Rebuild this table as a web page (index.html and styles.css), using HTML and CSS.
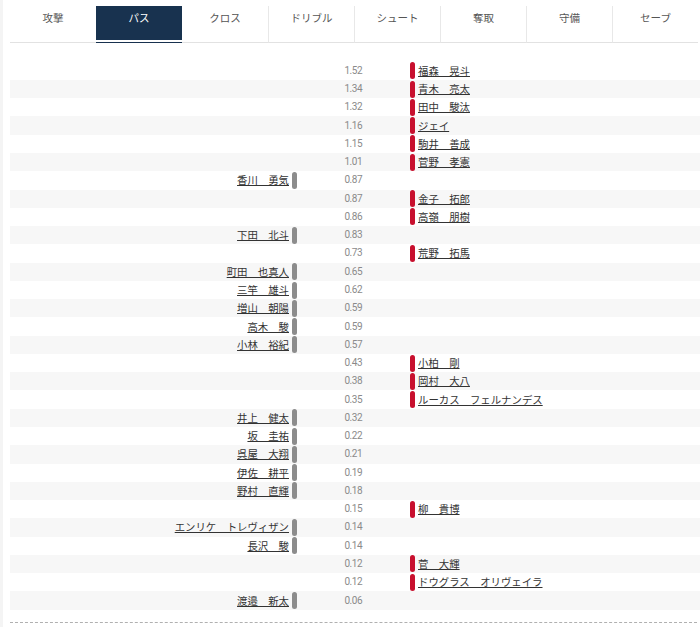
FILE: index.html
```html
<!DOCTYPE html>
<html lang="ja">
<head>
<meta charset="utf-8">
<link rel="stylesheet" href="styles.css">
</head>
<body>
<div class="page">
  <ul class="tabs">
    <li class="tab"><span class="tab-link">攻撃</span></li>
    <li class="tab active"><span class="tab-link">パス</span></li>
    <li class="tab"><span class="tab-link">クロス</span></li>
    <li class="tab sep"><span class="tab-link">ドリブル</span></li>
    <li class="tab sep"><span class="tab-link">シュート</span></li>
    <li class="tab sep"><span class="tab-link">奪取</span></li>
    <li class="tab sep"><span class="tab-link">守備</span></li>
    <li class="tab sep"><span class="tab-link">セーブ</span></li>
  </ul>

  <div class="table">
    <div class="row"><div class="left"></div><div class="val">1.52</div><div class="right"><span class="bar red"></span><a class="name">福森　晃斗</a></div></div>
    <div class="row"><div class="left"></div><div class="val">1.34</div><div class="right"><span class="bar red"></span><a class="name">青木　亮太</a></div></div>
    <div class="row"><div class="left"></div><div class="val">1.32</div><div class="right"><span class="bar red"></span><a class="name">田中　駿汰</a></div></div>
    <div class="row"><div class="left"></div><div class="val">1.16</div><div class="right"><span class="bar red"></span><a class="name">ジェイ</a></div></div>
    <div class="row"><div class="left"></div><div class="val">1.15</div><div class="right"><span class="bar red"></span><a class="name">駒井　善成</a></div></div>
    <div class="row"><div class="left"></div><div class="val">1.01</div><div class="right"><span class="bar red"></span><a class="name">菅野　孝憲</a></div></div>
    <div class="row"><div class="left"><a class="name">香川　勇気</a><span class="bar gray"></span></div><div class="val">0.87</div><div class="right"></div></div>
    <div class="row"><div class="left"></div><div class="val">0.87</div><div class="right"><span class="bar red"></span><a class="name">金子　拓郎</a></div></div>
    <div class="row"><div class="left"></div><div class="val">0.86</div><div class="right"><span class="bar red"></span><a class="name">高嶺　朋樹</a></div></div>
    <div class="row"><div class="left"><a class="name">下田　北斗</a><span class="bar gray"></span></div><div class="val">0.83</div><div class="right"></div></div>
    <div class="row"><div class="left"></div><div class="val">0.73</div><div class="right"><span class="bar red"></span><a class="name">荒野　拓馬</a></div></div>
    <div class="row"><div class="left"><a class="name">町田　也真人</a><span class="bar gray"></span></div><div class="val">0.65</div><div class="right"></div></div>
    <div class="row"><div class="left"><a class="name">三竿　雄斗</a><span class="bar gray"></span></div><div class="val">0.62</div><div class="right"></div></div>
    <div class="row"><div class="left"><a class="name">増山　朝陽</a><span class="bar gray"></span></div><div class="val">0.59</div><div class="right"></div></div>
    <div class="row"><div class="left"><a class="name">高木　駿</a><span class="bar gray"></span></div><div class="val">0.59</div><div class="right"></div></div>
    <div class="row"><div class="left"><a class="name">小林　裕紀</a><span class="bar gray"></span></div><div class="val">0.57</div><div class="right"></div></div>
    <div class="row"><div class="left"></div><div class="val">0.43</div><div class="right"><span class="bar red"></span><a class="name">小柏　剛</a></div></div>
    <div class="row"><div class="left"></div><div class="val">0.38</div><div class="right"><span class="bar red"></span><a class="name">岡村　大八</a></div></div>
    <div class="row"><div class="left"></div><div class="val">0.35</div><div class="right"><span class="bar red"></span><a class="name">ルーカス　フェルナンデス</a></div></div>
    <div class="row"><div class="left"><a class="name">井上　健太</a><span class="bar gray"></span></div><div class="val">0.32</div><div class="right"></div></div>
    <div class="row"><div class="left"><a class="name">坂　圭祐</a><span class="bar gray"></span></div><div class="val">0.22</div><div class="right"></div></div>
    <div class="row"><div class="left"><a class="name">呉屋　大翔</a><span class="bar gray"></span></div><div class="val">0.21</div><div class="right"></div></div>
    <div class="row"><div class="left"><a class="name">伊佐　耕平</a><span class="bar gray"></span></div><div class="val">0.19</div><div class="right"></div></div>
    <div class="row"><div class="left"><a class="name">野村　直輝</a><span class="bar gray"></span></div><div class="val">0.18</div><div class="right"></div></div>
    <div class="row"><div class="left"></div><div class="val">0.15</div><div class="right"><span class="bar red"></span><a class="name">柳　貴博</a></div></div>
    <div class="row"><div class="left"><a class="name">エンリケ　トレヴィザン</a><span class="bar gray"></span></div><div class="val">0.14</div><div class="right"></div></div>
    <div class="row"><div class="left"><a class="name">長沢　駿</a><span class="bar gray"></span></div><div class="val">0.14</div><div class="right"></div></div>
    <div class="row"><div class="left"></div><div class="val">0.12</div><div class="right"><span class="bar red"></span><a class="name">菅　大輝</a></div></div>
    <div class="row"><div class="left"></div><div class="val">0.12</div><div class="right"><span class="bar red"></span><a class="name">ドウグラス　オリヴェイラ</a></div></div>
    <div class="row"><div class="left"><a class="name">渡邉　新太</a><span class="bar gray"></span></div><div class="val">0.06</div><div class="right"></div></div>
  </div>
  <div class="dash"></div>
</div>
</body>
</html>
```

FILE: styles.css
```css
html, body {
  margin: 0;
  padding: 0;
  background: #ffffff;
}

body {
  font-family: "Noto Sans CJK JP", "Noto Sans", sans-serif;
  color: #333333;
}

.page {
  border-left: 3px solid #f4f4f4;
  padding-left: 7px;
  min-height: 627px;
  box-sizing: border-box;
}

.tabs {
  list-style: none;
  margin: 0;
  padding: 6px 2px 0 0;
  display: grid;
  grid-template-columns: repeat(8, 1fr);
}

.tab {
  padding-bottom: 2px;
  border-bottom: 1px solid #e2e2e2;
}

.tab.sep {
  border-left: 1px solid #e8e8e8;
}

.tab-link {
  display: block;
  height: 34px;
  box-sizing: border-box;
  padding-top: 5px;
  line-height: 14px;
  font-size: 10.5px;
  text-align: center;
  color: #555555;
}

.tab.active {
  border-bottom-color: #18324f;
}

.tab.active .tab-link {
  background: #18324f;
  color: #ffffff;
}

.table {
  margin-top: 18.7px;
}

.row {
  display: grid;
  grid-template-columns: 290px 62px 1fr;
  height: 18.28px;
  align-items: center;
}

.row:nth-child(even) {
  background: #f7f7f7;
}

.left {
  display: flex;
  justify-content: flex-end;
  align-items: center;
  padding-right: 3px;
  height: 100%;
}

.right {
  display: flex;
  align-items: center;
  padding-left: 48px;
  height: 100%;
}

.val {
  text-align: right;
  font-family: Roboto, "Liberation Sans", sans-serif;
  font-size: 10px;
  letter-spacing: -0.5px;
  color: #8a8a8a;
  line-height: 14px;
}

.name {
  font-size: 10.4px;
  line-height: 14px;
  color: #333333;
  text-decoration: underline;
  white-space: nowrap;
}

.bar {
  display: block;
  flex-shrink: 0;
  width: 5px;
  height: 17px;
  border-radius: 3px;
}

.left .bar {
  margin-left: 3px;
}

.right .bar {
  margin-right: 3px;
}

.bar.gray {
  background: #8c8c8c;
}

.bar.red {
  background: #c8102e;
}

.dash {
  margin-top: 12px;
  margin-right: 3px;
  border-top: 1px dashed #b0b0b0;
}
```
